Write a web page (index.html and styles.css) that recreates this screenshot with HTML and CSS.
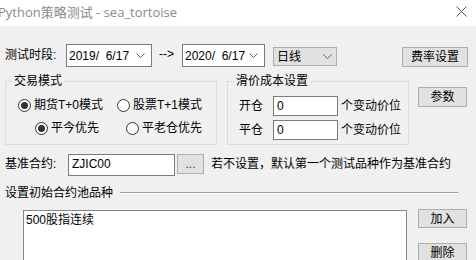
FILE: index.html
```html
<!doctype html>
<html lang="zh-CN">
<head>
    <meta charset="UTF-8">
    <title>Python策略测试 - sea_tortoise</title>
    <link rel="stylesheet" href="styles.css">
</head>
<body>
<div class="titlebar">
    <span class="title">Python策略测试 - sea_tortoise</span>
    <svg class="close" width="11" height="11" viewBox="0 0 11 11">
        <path d="M0.5 0.5 L10.5 10.5 M10.5 0.5 L0.5 10.5" stroke="#555" stroke-width="1" fill="none"/>
    </svg>
</div>
<div class="content">
    <!-- 测试时段 -->
    <div class="row period">
        <span class="label period-label">测试时段:</span>
        <div class="combo date"><span>2019/&nbsp;&nbsp;6/17</span><svg class="chev" width="9" height="5" viewBox="0 0 9 5"><path d="M0.5 0.5 L4.5 4.5 L8.5 0.5" stroke="#606060" fill="none"/></svg></div>
        <span class="arrow">--&gt;</span>
        <div class="combo date date2"><span>2020/&nbsp;&nbsp;6/17</span><svg class="chev" width="9" height="5" viewBox="0 0 9 5"><path d="M0.5 0.5 L4.5 4.5 L8.5 0.5" stroke="#606060" fill="none"/></svg></div>
        <div class="combo flat"><span>日线</span><svg class="chev" width="9" height="5" viewBox="0 0 9 5"><path d="M0.5 0.5 L4.5 4.5 L8.5 0.5" stroke="#606060" fill="none"/></svg></div>
        <button class="btn fee">费率设置</button>
    </div>

    <!-- 交易模式 / 滑价 -->
    <div class="row groups">
        <fieldset class="group mode">
            <legend>交易模式</legend>
            <div class="radios first">
                <label class="radio wide checked"><i></i>期货T+0模式</label>
                <label class="radio"><i></i>股票T+1模式</label>
            </div>
            <div class="radios second">
                <label class="radio mid checked"><i></i>平今优先</label>
                <label class="radio"><i></i>平老仓优先</label>
            </div>
        </fieldset>
        <fieldset class="group slip">
            <legend>滑价成本设置</legend>
            <div class="slip-row"><span class="slip-label">开仓</span><input class="edit" value="0"><span class="unit">个变动价位</span></div>
            <div class="slip-row"><span class="slip-label">平仓</span><input class="edit" value="0"><span class="unit">个变动价位</span></div>
        </fieldset>
        <button class="btn param">参数</button>
    </div>

    <!-- 基准合约 -->
    <div class="row bench">
        <span class="label bench-label">基准合约:</span>
        <input class="edit bench-edit" value="ZJIC00">
        <button class="btn dots">...</button>
        <span class="hint">若不设置，默认第一个测试品种作为基准合约</span>
    </div>

    <div class="row sep">
        <span>设置初始合约池品种</span>
        <div class="line"></div>
    </div>

    <div class="row pool">
        <div class="listbox">
            <div class="item">500股指连续</div>
        </div>
        <div class="pool-btns">
            <button class="btn add">加入</button>
            <button class="btn del">删除</button>
        </div>
    </div>
</div>
</body>
</html>
```

FILE: styles.css
```css
* {
    padding: 0;
    margin: 0;
    box-sizing: border-box;
}

html, body {
    width: 476px;
    height: 260px;
    overflow: hidden;
}

body {
    background-color: #f0f0f0;
    font-family: "Liberation Sans", "Noto Sans CJK SC", sans-serif;
    font-size: 12px;
    line-height: 16px;
    color: #000;
}

.titlebar {
    height: 26px;
    background-color: #fff;
    display: flex;
    align-items: center;
    justify-content: space-between;
}

.titlebar .title {
    font-family: "Open Sans", "Noto Sans CJK SC", sans-serif;
    font-size: 13px;
    color: #8a8a8a;
    margin-left: -2px;
    margin-top: -2px;
}

.titlebar .close {
    margin-right: 9px;
    margin-top: -4px;
}

.content {
    padding-left: 5px;
}

.row {
    display: flex;
    align-items: flex-start;
}

/* 测试时段 */
.period {
    margin-top: 18px;
    height: 23px;
}

.period-label {
    width: 61px;
    line-height: 23px;
}

.combo {
    display: flex;
    align-items: center;
    justify-content: space-between;
    background-color: #fff;
    border: 1px solid #7a7a7a;
}

.combo .chev {
    margin-right: 6px;
}

.date {
    width: 86px;
    height: 23px;
    padding-left: 2px;
}

.date2 {
    width: 83px;
}

.arrow {
    width: 30px;
    padding-left: 7px;
    line-height: 21px;
}

.flat {
    width: 64px;
    height: 19px;
    margin-top: 3px;
    margin-left: 8px;
    padding-left: 3px;
    background-color: #e1e1e1;
    border-color: #adadad;
}

.flat .chev {
    margin-right: 4px;
}

.btn {
    font-family: inherit;
    font-size: 12px;
    line-height: 16px;
    color: #000;
    background-color: #e1e1e1;
    border: 1px solid #adadad;
}

.fee {
    width: 66px;
    height: 20px;
    margin-top: 3px;
    margin-left: 65px;
}

/* 分组 */
.groups {
    margin-top: 7px;
}

.group {
    border: 1px solid #dcdcdc;
    min-width: 0;
}

.group legend {
    margin-left: 6px;
    padding: 0 2px;
    line-height: 14px;
}

.mode {
    width: 212px;
    height: 71px;
}

.radios {
    display: flex;
    align-items: center;
    height: 16px;
}

.radios.first {
    margin-top: 9px;
    padding-left: 12px;
}

.radios.second {
    margin-top: 7px;
    padding-left: 29px;
}

.radio {
    display: flex;
    align-items: center;
}

.radio i {
    width: 13px;
    height: 13px;
    margin-right: 3px;
    border: 1px solid #333;
    border-radius: 50%;
    background-color: #fff;
    display: flex;
    align-items: center;
    justify-content: center;
}

.radio.checked i::after {
    content: "";
    width: 7px;
    height: 7px;
    border-radius: 50%;
    background-color: #333;
}

.radio.wide {
    width: 99px;
}

.radio.mid {
    width: 91px;
}

.slip {
    width: 182px;
    height: 71px;
    margin-left: 10px;
}

.slip-row {
    display: flex;
    align-items: center;
    height: 20px;
    margin-top: 4px;
    padding-left: 11px;
}

.slip-row:first-of-type {
    margin-top: 8px;
}

.slip-label {
    width: 34px;
}

.edit {
    font-family: inherit;
    font-size: 12px;
    color: #000;
    background-color: #fff;
    border: 1px solid #7a7a7a;
    outline: none;
}

.slip-row .edit {
    width: 65px;
    height: 20px;
    padding-left: 3px;
}

.unit {
    margin-left: 3px;
}

.param {
    width: 49px;
    height: 20px;
    margin-top: 13px;
    margin-left: 9px;
}

/* 基准合约 */
.bench {
    margin-top: 9px;
    height: 22px;
}

.bench-label {
    width: 63px;
    line-height: 20px;
}

.bench-edit {
    width: 107px;
    height: 22px;
    padding-left: 3px;
    padding-bottom: 2px;
}

.dots {
    width: 27px;
    height: 20px;
    margin-left: 2px;
    color: #3a1f9c;
}

.hint {
    margin-left: 7px;
    line-height: 20px;
}

/* 合约池 */
.sep {
    margin-top: 9px;
    height: 16px;
    align-items: center;
}

.sep .line {
    flex: 1;
    margin-left: 7px;
    margin-right: 18px;
    border-top: 1px solid #a0a0a0;
    border-bottom: 1px solid #fff;
}

.pool {
    margin-top: 9px;
}

.listbox {
    width: 384px;
    height: 50px;
    margin-left: 18px;
    background-color: #fff;
    border: 1px solid #828790;
    border-bottom: none;
    padding: 1px 2px;
}

.pool-btns {
    display: flex;
    flex-direction: column;
    margin-left: 11px;
    margin-top: -1px;
}

.add {
    width: 49px;
    height: 19px;
}

.del {
    width: 49px;
    height: 18px;
    margin-top: 15px;
    border-bottom: none;
}
```
